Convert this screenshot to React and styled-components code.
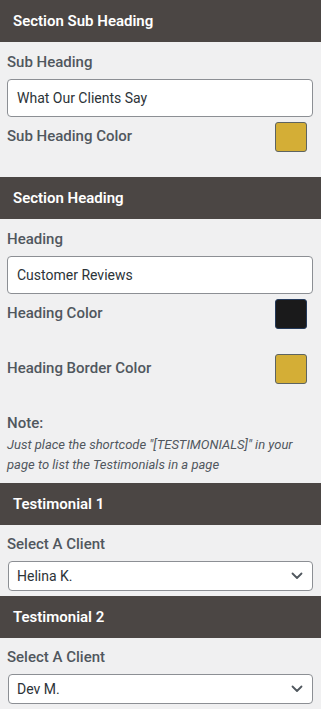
import React from "react";
import styled, { createGlobalStyle } from "styled-components";

const Global = createGlobalStyle`
  html, body { margin: 0; padding: 0; background: #f0f0f1; }
  body { font-family: Roboto, "Liberation Sans", Arial, sans-serif; }
  * { box-sizing: border-box; }
`;

const Page = styled.div`
  width: 321px;
  background: #f0f0f1;
`;

const Header = styled.div`
  height: 42px;
  background: #4b4644;
  color: #ffffff;
  font-size: 15px;
  font-weight: 600;
  display: flex;
  align-items: center;
  padding-left: 13px;
`;

const Body = styled.div`
  padding: 0 8px ${(p) => p.$pb ?? 25}px 7px;
  display: flex;
  flex-direction: column;
`;

const Label = styled.div`
  font-size: 15px;
  font-weight: 500;
  color: #50575e;
  line-height: 20px;
  margin-top: ${(p) => p.$mt ?? 10}px;
  margin-bottom: ${(p) => p.$mb ?? 7}px;
`;

const TextInput = styled.div`
  height: 38px;
  background: #fff;
  border: 1px solid #8c8f94;
  border-radius: 4px;
  display: flex;
  align-items: center;
  padding-left: 9px;
  font-size: 14px;
  color: #2c3338;
`;

const ColorRow = styled.div`
  display: flex;
  align-items: center;
  justify-content: space-between;
  margin-top: ${(p) => p.$mt ?? 5}px;
  padding-right: 6px;
`;

const ColorLabel = styled.span`
  font-size: 15px;
  font-weight: 500;
  color: #50575e;
  margin-top: -3px;
`;

const Swatch = styled.div`
  width: 32px;
  height: 30px;
  border-radius: 3px;
  background: ${(p) => p.$color};
  border: 1px solid ${(p) => p.$border};
`;

const Note = styled.div`
  margin-top: 29px;
  font-size: 15px;
  font-weight: 500;
  color: #50575e;
  line-height: 20px;
`;

const NoteText = styled.p`
  margin: 2px 0 0;
  font-size: 13px;
  font-style: italic;
  color: #50575e;
  line-height: 20px;
`;

const Select = styled.div`
  height: 30px;
  margin-left: 1px;
  background: #fff;
  border: 1px solid #8c8f94;
  border-radius: 4px;
  display: flex;
  align-items: center;
  justify-content: space-between;
  padding: 0 9px 0 8px;
  font-size: 14px;
  color: #2c3338;
`;

const Chevron = () => (
  <svg width="12" height="8" viewBox="0 0 12 8" fill="none">
    <path d="M1.5 1.5 L6 6 L10.5 1.5" stroke="#50575e" strokeWidth="1.8" strokeLinecap="round" strokeLinejoin="round" />
  </svg>
);

export default function App() {
  return (
    <Page>
      <Global />
      <Header>Section Sub Heading</Header>
      <Body>
        <Label>Sub Heading</Label>
        <TextInput>What Our Clients Say</TextInput>
        <ColorRow>
          <ColorLabel>Sub Heading Color</ColorLabel>
          <Swatch $color="#d4ae36" $border="#5d6462" />
        </ColorRow>
      </Body>
      <Header>Section Heading</Header>
      <Body $pb={8}>
        <Label>Heading</Label>
        <TextInput>Customer Reviews</TextInput>
        <ColorRow>
          <ColorLabel>Heading Color</ColorLabel>
          <Swatch $color="#1a1a1b" $border="#23395a" />
        </ColorRow>
        <ColorRow $mt={25}>
          <ColorLabel>Heading Border Color</ColorLabel>
          <Swatch $color="#d4ae36" $border="#5d6462" />
        </ColorRow>
        <Note>Note:</Note>
        <NoteText>
          Just place the shortcode "[TESTIMONIALS]" in your page to list the Testimonials in a page
        </NoteText>
      </Body>
      <Header>Testimonial 1</Header>
      <Body $pb={5}>
        <Label $mt={9} $mb={7}>Select A Client</Label>
        <Select>
          Helina K.
          <Chevron />
        </Select>
      </Body>
      <Header>Testimonial 2</Header>
      <Body $pb={5}>
        <Label $mt={9} $mb={7}>Select A Client</Label>
        <Select>
          Dev M.
          <Chevron />
        </Select>
      </Body>
    </Page>
  );
}
